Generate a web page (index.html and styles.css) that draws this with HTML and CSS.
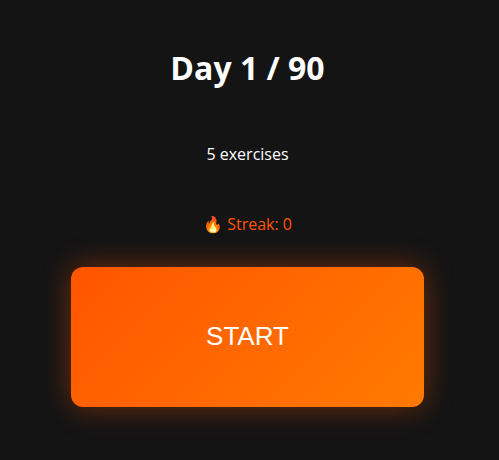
FILE: index.html
```html
<!DOCTYPE html>
<html lang="en">
<head>
<meta charset="utf-8">
<title>Day 1 / 90</title>
<link rel="stylesheet" href="styles.css">
</head>
<body>
<main class="screen">
  <h1 class="title">Day 1 / 90</h1>
  <p class="count">5 exercises</p>
  <p class="streak">🔥 Streak: 0</p>
  <button class="start">START</button>
</main>
</body>
</html>
```
FILE: styles.css
```css
html, body { margin: 0; height: 100%; background: #141414; }
.screen {
  box-sizing: border-box;
  width: 495px;
  height: 460px;
  padding-top: 46px;
  display: flex;
  flex-direction: column;
  align-items: center;
  font-family: "Open Sans", "Noto Sans", sans-serif;
  color: #fff;
}
.title { margin: 0; font-size: 32px; line-height: 44px; font-weight: 700; }
.count { margin: 53px 0 0; font-size: 16px; line-height: 22px; }
.streak { margin: 48px 0 0; font-size: 16px; line-height: 22px; color: #ff5500; }
.start {
  margin-top: 32px;
  width: 353px;
  height: 140px;
  padding: 0 0 2px;
  border: 0;
  border-radius: 12px;
  background: linear-gradient(135deg, #ff5500, #ff7a00);
  box-shadow: 0 0 30px rgba(255, 85, 0, 0.4);
  color: #fff;
  font-family: "Liberation Sans", Arial, sans-serif;
  font-size: 26px;
}
```
